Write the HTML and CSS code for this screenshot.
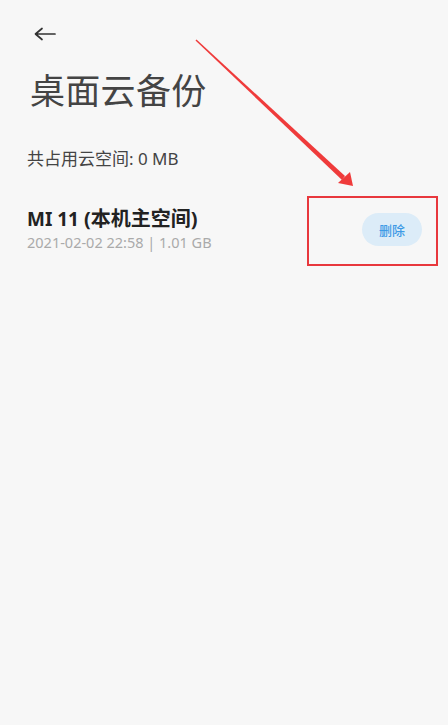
FILE: index.html
```html
<!DOCTYPE html>
<html lang="zh-CN">
<head>
<meta charset="utf-8">
<link rel="stylesheet" href="styles.css">
</head>
<body>
<div class="page">
  <header class="bar">
    <svg class="back" width="24" height="14" viewBox="0 0 24 14">
      <path d="M22 7H3M9 1.5L2.5 7L9 12.5" fill="none" stroke="#333" stroke-width="1.7" stroke-linecap="round" stroke-linejoin="round"/>
    </svg>
  </header>
  <h1 class="title">桌面云备份</h1>
  <div class="usage">共占用云空间: 0 MB</div>
  <div class="item">
    <div class="info">
      <div class="name">MI 11 <span class="cjk">(本机主空间)</span></div>
      <div class="meta">2021-02-02 22:58 | 1.01 GB</div>
    </div>
    <button class="del">删除</button>
  </div>
  <div class="mark-box"></div>
  <svg class="mark-arrow" width="448" height="725" viewBox="0 0 448 725">
    <polygon points="195.5,40.5 196.5,39.5 345,176 342,180" fill="#ef3b3b"/>
    <polygon points="353,186 338,183 350,172" fill="#ef3b3b"/>
  </svg>
</div>
</body>
</html>
```
FILE: styles.css
```css
html, body {
  margin: 0;
  padding: 0;
  background: #f7f7f7;
}
body {
  font-family: "Noto Sans", "Noto Sans CJK SC", sans-serif;
  color: #333;
}
.page {
  position: relative;
  width: 448px;
  height: 725px;
  overflow: hidden;
}
.bar {
  height: 66px;
  padding: 27px 0 0 33px;
  box-sizing: border-box;
}
.back {
  display: block;
}
.title {
  margin: 0;
  padding-left: 30px;
  font-size: 35px;
  font-weight: 400;
  line-height: 50px;
  color: #444;
  letter-spacing: 0.3px;
}
.usage {
  margin-top: 31px;
  padding-left: 27px;
  font-size: 17px;
  line-height: 24px;
  color: #444;
}
.item {
  display: flex;
  align-items: center;
  justify-content: space-between;
  margin-top: 35px;
  padding: 0 26px 0 27px;
}
.name {
  font-size: 19px;
  font-weight: 700;
  line-height: 26px;
  color: #222;
}
.cjk {
  font-size: 20px;
}
.meta {
  margin-top: 0;
  font-size: 14.5px;
  line-height: 20px;
  color: #aaa;
}
.del {
  width: 60px;
  height: 33px;
  border: none;
  border-radius: 17px;
  background: #dcecf8;
  color: #3d9ae6;
  font-family: "Noto Sans CJK SC", sans-serif;
  font-size: 13px;
  font-weight: 500;
  padding: 0;
}
.mark-box {
  position: absolute;
  left: 307px;
  top: 196px;
  width: 127px;
  height: 66px;
  border: 2px solid #e8383d;
}
.mark-arrow {
  position: absolute;
  left: 0;
  top: 0;
  pointer-events: none;
}
```
